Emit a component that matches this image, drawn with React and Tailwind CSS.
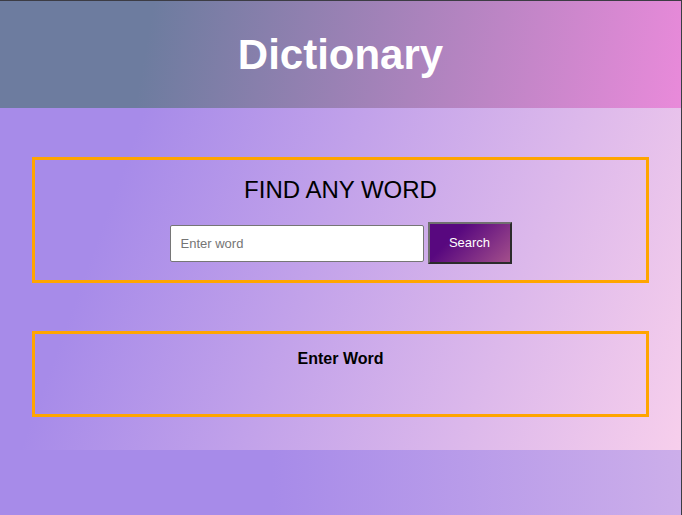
import React from "react";

function Header() {
  return (
    <header className="h-[107px] flex items-center justify-center bg-[linear-gradient(100deg,#6d7c9f_22%,#e98ada_100%)]">
      <h1 className="text-[42px] font-bold text-white leading-none">Dictionary</h1>
    </header>
  );
}

function SearchBox() {
  return (
    <div className="h-[126px] mx-8 border-[3px] border-[#ffa500] flex flex-col items-center pt-[16px]">
      <h2 className="text-[24px] leading-[28px] text-black">FIND ANY WORD</h2>
      <div className="mt-[18px] h-[42px] flex items-center gap-[4px]">
        <input
          type="text"
          placeholder="Enter word"
          className="w-[254px] h-[37px] px-[10px] bg-white border border-[#767676] rounded-[2px] text-[13px] text-black placeholder:text-[#757575] outline-none"
        />
        <button className="w-[84px] h-[42px] border-2 border-t-[#707070] border-l-[#707070] border-b-[#2b2b2b] border-r-[#2b2b2b] bg-[linear-gradient(135deg,#58087f_30%,#a34f8b_100%)] text-white text-[13px]">
          Search
        </button>
      </div>
    </div>
  );
}

function ResultBox() {
  return (
    <div className="h-[86px] mx-8 mt-[48px] border-[3px] border-[#ffa500] flex flex-col items-center pt-[15px]">
      <p className="text-base font-bold leading-[20px] text-black">Enter Word</p>
    </div>
  );
}

export default function App() {
  return (
    <div className="h-[515px] overflow-hidden border-t border-t-[#3c3c44] border-r border-r-[#3c3c44] font-['Liberation_Sans',Arial,sans-serif]">
      <Header />
      <main className="pt-[49px] pb-[33px] bg-[linear-gradient(110deg,#a78be9_18%,#f7cfec_100%)]">
        <SearchBox />
        <ResultBox />
      </main>
      <footer className="h-[65px] bg-[linear-gradient(to_right,#a78be9_40%,#ccaeea_100%)]" />
    </div>
  );
}
